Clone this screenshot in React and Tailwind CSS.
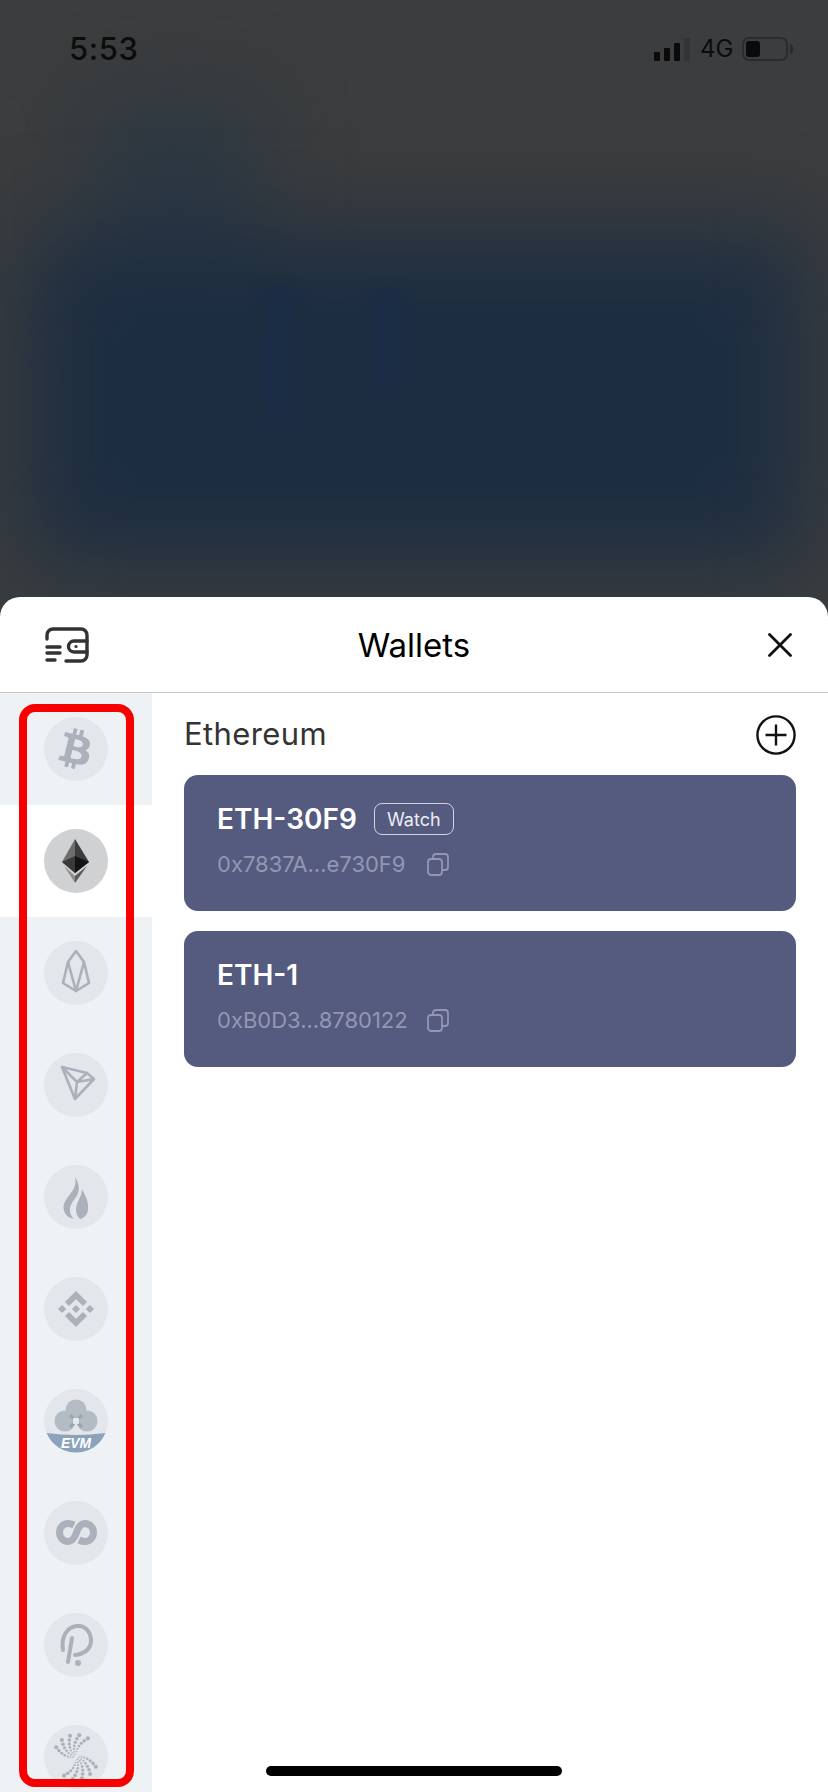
import React from 'react';
import { FaBtc } from 'react-icons/fa';
import { SiBinance } from 'react-icons/si';

const GREY = '#aab1ba';

const EthIcon = () => (
  <svg viewBox="0 0 64 64" className="w-16 h-16">
    <polygon points="31,10 18,33 31,44" fill="#6e6e6e" />
    <polygon points="31,10 45,33 31,44" fill="#3d3d3d" />
    <polygon points="18,33 31,27 31,44" fill="#3a3a3a" />
    <polygon points="45,33 31,27 31,44" fill="#141414" />
    <polygon points="20,37 31,54 31,47" fill="#8f8f8f" />
    <polygon points="43,37 31,54 31,47" fill="#5a5a5a" />
  </svg>
);

const EosIcon = () => (
  <svg viewBox="0 0 64 64" className="w-16 h-16" fill="none" stroke={GREY} strokeWidth="2.6" strokeLinejoin="round">
    <path d="M32 10 L24 21 L19 42 L32 50 L45 42 L40 21 Z" />
    <path d="M24 21 L32 50 L40 21" />
  </svg>
);

const TronIcon = () => (
  <svg viewBox="0 0 64 64" className="w-16 h-16" fill="none" stroke={GREY} strokeWidth="2.6" strokeLinejoin="round">
    <path d="M18 14 L43 20 L50 26 L31 46 Z" />
    <path d="M18 14 L33 29 L31 46 M33 29 L50 26 M33 29 L43 20" />
  </svg>
);

const HuobiIcon = () => (
  <svg viewBox="0 0 64 64" className="w-16 h-16" fill={GREY}>
    <path d="M31 12 C33 22 28 26 24 32 C20 37 18 42 21 48 C23 52 27 53 30 54 C24 48 25 41 30 35 C34 30 38 23 31 12 Z" />
    <path d="M38 24 C38 32 32 37 32 45 C32 49 34 52 36 54 C41 53 45 48 44 41 C44 35 41 30 38 24 Z" />
  </svg>
);

const EvmIcon = () => (
  <svg viewBox="0 0 64 64" className="w-16 h-16">
    <circle cx="32" cy="21" r="10.5" fill="#b3bbc4" />
    <circle cx="21" cy="32" r="10.5" fill="#b3bbc4" />
    <circle cx="43" cy="32" r="10.5" fill="#b3bbc4" />
    <path d="M26 26 L38 38 M38 26 L26 38" stroke="#9aa3ad" strokeWidth="3" />
    <rect x="29" y="29" width="6" height="6" fill="#e3e6ea" />
    <path d="M2.5 44 Q32 48 61.5 44 A32 32 0 0 1 2.5 44 Z" fill="#8aa3bb" />
    <text x="32" y="59" textAnchor="middle" fontSize="15.5" fontWeight="700" fontStyle="italic" fill="#ffffff" textLength="30" lengthAdjust="spacingAndGlyphs" fontFamily="'Liberation Sans', sans-serif">EVM</text>
  </svg>
);

const LinkIcon = () => (
  <svg viewBox="0 0 64 64" className="w-16 h-16" fill="none" stroke={GREY} strokeWidth="7">
    <path d="M30 24 C28 23 26 22.5 24 22.5 A8.5 9 0 0 0 24 40.5 C29 40.5 31 36 32.5 31.5 C34 27 36 22.5 41 22.5 A8.5 9 0 0 1 41 40.5 C39 40.5 37 40 35 39" />
  </svg>
);

const DotIcon = () => (
  <svg viewBox="0 0 64 64" className="w-16 h-16" fill="none" stroke={GREY} strokeWidth="4" strokeLinecap="round">
    <path d="M19 37 C17 25 22 14 33 13 C42 12 47 20 47 28 C47 36 40 41 31 42" />
    <path d="M28 25 L24 49" />
    <circle cx="34" cy="50" r="3" fill={GREY} stroke="none" />
  </svg>
);

// two-armed spiral of dots
const spiralDots = [];
[0, Math.PI].forEach((arm) => {
  [0, 1, 2, 3, 4].forEach((strand) => {
    for (let i = 0; i < 7; i++) {
      const radius = 3 + i * 2.4 + i * i * 0.13;
      const angle = arm + 3.0 + strand * 0.42 + i * 0.1;
      spiralDots.push({
        x: 32 + radius * Math.cos(angle),
        y: 32 + radius * Math.sin(angle),
        r: 0.6 + i * 0.24,
      });
    }
  });
});

const SpiralIcon = () => (
  <svg viewBox="0 0 64 64" className="w-16 h-16" fill={GREY}>
    {spiralDots.map((dot, index) => (
      <circle key={index} cx={dot.x} cy={dot.y} r={dot.r} />
    ))}
  </svg>
);

const coins = [
  { id: 'btc', icon: <FaBtc size={40} color={GREY} className="rotate-[14deg]" /> },
  { id: 'eth', active: true, icon: <EthIcon /> },
  { id: 'eos', icon: <EosIcon /> },
  { id: 'trx', icon: <TronIcon /> },
  { id: 'ht', icon: <HuobiIcon /> },
  { id: 'bnb', icon: <SiBinance size={36} color={GREY} /> },
  { id: 'evm', icon: <EvmIcon /> },
  { id: 'link', icon: <LinkIcon /> },
  { id: 'dot', icon: <DotIcon /> },
  { id: 'iost', icon: <SpiralIcon /> },
];

const wallets = [
  { name: 'ETH-30F9', address: '0x7837A...e730F9', watch: true },
  { name: 'ETH-1', address: '0xB0D3...8780122' },
];

const CopyIcon = () => (
  <svg viewBox="0 0 22 23" className="w-[22px] h-[23px]" fill="none" stroke="#9397b1" strokeWidth="1.8">
    <rect x="1" y="6" width="14" height="16" rx="3" />
    <path d="M6 6 V4 A3 3 0 0 1 9 1 H18 A3 3 0 0 1 21 4 V14 A3 3 0 0 1 18 17 H15" />
  </svg>
);

const StatusBar = () => (
  <div className="relative flex items-center justify-between pl-[69px] pr-[35px] pt-[31px] text-[#0c0c0c]">
    <span className="text-[31px] leading-[36px] font-medium tracking-[0.6px]">5:53</span>
    <div className="flex items-center">
      <div className="flex items-end gap-1 h-[23px]">
        <div className="w-1.5 h-[9px] rounded-[1px] bg-[#0a0a0a]" />
        <div className="w-1.5 h-[13px] rounded-[1px] bg-[#0a0a0a]" />
        <div className="w-1.5 h-[18px] rounded-[1px] bg-[#0a0a0a]" />
        <div className="w-1.5 h-[23px] rounded-[1px] bg-[#333436]" />
      </div>
      <span className="ml-2.5 w-[30px] text-[24px] leading-7">4G</span>
      <div className="ml-3 w-[46px] h-6 rounded-[7px] border-2 border-[#2a2b2d] p-[2px]">
        <div className="w-3.5 h-full rounded-[3px] bg-[#0a0a0a]" />
      </div>
      <div className="ml-[2px] w-[3px] h-2.5 rounded-r-sm bg-[#2a2b2d]" />
    </div>
  </div>
);

const WalletCard = ({ wallet }) => (
  <div className="h-[136px] rounded-[14px] bg-[#545b7f] pl-[33px] pt-7">
    <div className="flex items-center h-8">
      <span className="text-[28px] leading-8 font-semibold text-white">{wallet.name}</span>
      <span className={`ml-[17px] w-20 h-8 items-center justify-center rounded-lg border-[1.5px] border-[#d0d3e0] text-[18px] text-[#eceef5] ${wallet.watch ? 'flex' : 'hidden'}`}>
        Watch
      </span>
    </div>
    <div className="flex items-center mt-4 h-[26px] text-[22px] leading-[26px] text-[#9397b1]">
      <span className="w-[210px]">{wallet.address}</span>
      <CopyIcon />
    </div>
  </div>
);

export default function App() {
  return (
    <div className="relative flex flex-col w-[828px] h-[1792px] overflow-hidden bg-[#3b3d3e] font-['Inter',sans-serif]">
      {/* blurred page behind the sheet */}
      <div className="absolute left-[90px] top-[100px] w-[170px] h-[200px] bg-[#2d3842] blur-[40px]" />
      <div className="absolute left-[25px] top-[235px] w-[780px] h-[330px] bg-[#1d2d41] blur-[45px]" />
      <div className="absolute left-[262px] top-[290px] w-[36px] h-[130px] bg-[#1b2c45] blur-[6px]" />
      <div className="absolute left-[372px] top-[290px] w-[32px] h-[100px] bg-[#1b2c45] blur-[6px]" />

      <StatusBar />

      <div className="relative mt-auto h-[1195px] flex flex-col rounded-t-[20px] bg-white overflow-hidden">
        <header className="h-24 shrink-0 grid grid-cols-[1fr_auto_1fr] items-center px-9 border-b border-[#c8c8c8]">
          <svg viewBox="0 0 44 36" className="w-11 h-9 ml-[9px]" fill="none" stroke="#333" strokeWidth="3.4" strokeLinecap="round">
            <path d="M2 12 V8 A6 6 0 0 1 8 2 H36 A6 6 0 0 1 42 8 V28 A6 6 0 0 1 36 34 H21" />
            <path d="M42 14 H29 A5.5 5.5 0 0 0 29 25 H42" />
            <path d="M2 20 H15 M2 26 H15 M2 33 H10" />
            <circle cx="31" cy="19.5" r="1.6" fill="#333" stroke="none" />
          </svg>
          <h1 className="pt-0.5 text-[33px] font-normal text-black">Wallets</h1>
          <svg viewBox="0 0 24 24" className="w-6 h-6 justify-self-end" fill="none" stroke="#111" strokeWidth="2.8" strokeLinecap="round">
            <path d="M1.5 1.5 L22.5 22.5 M22.5 1.5 L1.5 22.5" />
          </svg>
        </header>

        <div className="flex flex-1 min-h-0">
          <aside className="w-[152px] shrink-0 bg-[#eff2f5] overflow-hidden">
            {coins.map((coin) => (
              <div key={coin.id} className={`h-28 flex items-center justify-center ${coin.active ? 'bg-white' : ''}`}>
                <div className={`w-16 h-16 rounded-full flex items-center justify-center overflow-hidden ${coin.active ? 'bg-[#d0d1d3]' : 'bg-[#e3e6ea]'}`}>
                  {coin.icon}
                </div>
              </div>
            ))}
          </aside>

          <main className="flex-1 pl-8 pr-8">
            <div className="flex items-center justify-between h-[82px] pt-[1px]">
              <span className="text-[31px] tracking-[0.4px] text-[#333]">Ethereum</span>
              <svg viewBox="0 0 40 40" className="w-10 h-10" fill="none" stroke="#111" strokeWidth="2.4">
                <circle cx="20" cy="20" r="18.6" />
                <path d="M9.5 20 H30.5 M20 9.5 V30.5" />
              </svg>
            </div>
            <div className="flex flex-col gap-5">
              {wallets.map((wallet) => (
                <WalletCard key={wallet.name} wallet={wallet} />
              ))}
            </div>
          </main>
        </div>
      </div>

      {/* red highlight drawn over the coin list */}
      <div className="absolute left-[19px] top-[704px] w-[115px] h-[1083px] rounded-[16px] border-8 border-[#f80000]" />
      {/* home indicator */}
      <div className="absolute left-[266px] top-[1766px] w-[296px] h-2.5 rounded-full bg-black" />
    </div>
  );
}
